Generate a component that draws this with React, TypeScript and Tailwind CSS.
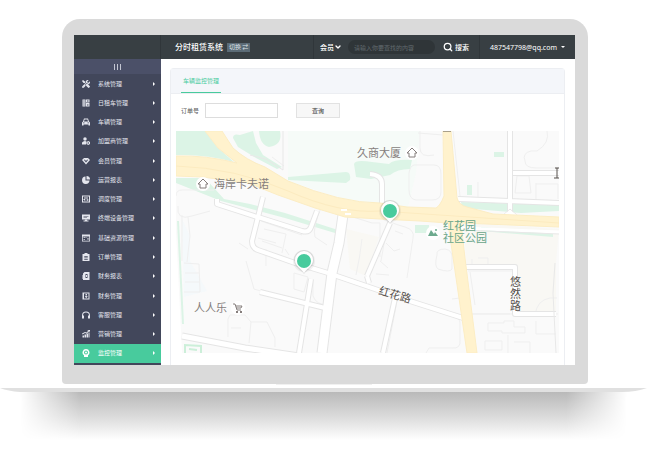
import { useState } from 'react'
import type { ReactNode } from 'react'
import { FaTools } from 'react-icons/fa'
import { Search, ChevronDown } from 'lucide-react'

function Glyph({ children }: { children: ReactNode }) {
  return (
    <svg viewBox="0 0 16 16" className="w-2 h-2 shrink-0" fill="currentColor" aria-hidden="true">
      {children}
    </svg>
  )
}

const menu = [
  { label: '系统管理', icon: <FaTools className="w-2 h-2 shrink-0" /> },
  {
    label: '日租车管理',
    icon: <Glyph><path fillRule="evenodd" d="M1 1h6v14H1zM3 3v2h2V3zM3 7v2h2V7zM3 11v2h2v-2zM8 1h7v6H8zM10 3v2h3V3zM8 8h7v7H8zM10 10v1h3v-1zM10 12v1h3v-1z" /></Glyph>,
  },
  {
    label: '车辆管理',
    icon: <Glyph><path fillRule="evenodd" d="M4 1h8l2 6 2 2v6h-3v-2H3v2H0V9l2-2zM5.200 3 4 7h8l-1.200-4zM2 9v1.500h3V9zM11 9v1.500h3V9z" /></Glyph>,
  },
  {
    label: '加盟商管理',
    icon: <Glyph><circle cx="6" cy="4" r="3.500" /><path d="M0 15v-3c0-2 3-4 6-4l3 1-1 6z" /><path fillRule="evenodd" d="M12.500 8 16 10v4l-3.500 2L9 14v-4zM12.500 10.500a1.500 1.500 0 1 0 0 3 1.500 1.500 0 0 0 0-3z" /></Glyph>,
  },
  {
    label: '会员管理',
    icon: <Glyph><path fillRule="evenodd" d="M4 2h8l4 4-8 9L0 6zM4 6l4 5 4-5-1.500-1L8 8 5.500 5z" /></Glyph>,
  },
  {
    label: '运营报表',
    icon: <Glyph><path d="M7 1v8h8a7.500 7.500 0 1 1-8-8z" /><path d="M9 0a7 7 0 0 1 7 7H9z" /></Glyph>,
  },
  {
    label: '调度管理',
    icon: <Glyph><path fillRule="evenodd" d="M0 1h16v14H0zM2 3v10h12V3z" /><path d="M4 4h1v8H4zM7.500 4h1v8h-1zM11 4h1v8h-1zM3 8h3v2H3zM6.500 5h3v2h-3zM10 9h3v2h-3z" /></Glyph>,
  },
  {
    label: '终端设备管理',
    icon: <Glyph><path fillRule="evenodd" d="M0 1h16v10H0zM3 4v1h10V4zM3 7v1h7V7z" /><path d="M6 11h4v2h3v2H3v-2h3z" /></Glyph>,
  },
  {
    label: '基础资源管理',
    icon: <Glyph><path fillRule="evenodd" d="M0 1h16v14H0zM1.500 5v8.500h13V5z" /><path d="M3 6.500h3v1.500H3zM7 6.500h2v1.500H7zM3 10h3v1.500H3zM11 7.500h2v4h-2z" /></Glyph>,
  },
  {
    label: '订单管理',
    icon: <Glyph><path fillRule="evenodd" d="M1 2h4V0h6v2h4v14H1zM4.500 6v1.500h7V6zM4.500 9v1.500h7V9zM4.500 12v1.500h7V12z" /></Glyph>,
  },
  {
    label: '财务报表',
    icon: <Glyph><path fillRule="evenodd" d="M5 0h10v16H2V3zM7 4v8h4V4zM8 6h2v4H8z" /><path d="M1 6h2v8H1z" /></Glyph>,
  },
  {
    label: '财务管理',
    icon: <Glyph><path fillRule="evenodd" d="M1 1h14v14H1zM4 3v10h9V3z" /><path d="M7 4h3v3H7zM6 8h5v1.500H6zM7.500 9h2v3h-2z" /></Glyph>,
  },
  {
    label: '客服管理',
    icon: <Glyph><path d="M0 9a8 8 0 0 1 16 0v6h-4V9h2A6 6 0 0 0 2 9h2v6H0z" /></Glyph>,
  },
  {
    label: '营销管理',
    icon: <Glyph><path d="M1 11h3v4H1zM5 9h3v6H5zM9 7h3v8H9zM13 5h2v10h-2zM0 7l6-3 3 1 4-4h-2V0h5v4h-1V2L9.500 7 6 6 1 9z" /></Glyph>,
  },
  {
    label: '监控管理',
    icon: <Glyph><path fillRule="evenodd" d="M8 0a7 7 0 0 1 4 12.700V16H4v-3.300A7 7 0 0 1 8 0zM8 3a4 4 0 1 0 0 8 4 4 0 0 0 0-8z" /><circle cx="8" cy="7" r="2" /></Glyph>,
  },
]

const lanes = [
  { w: 4, d: 'M41 68V73L81 86M87 66 76 110Q76 117 82 119L119 132 152 142M82 86 126 100Q133 102 135 96L141 80' },
  { w: 4, d: 'M152 142 196 157 237 171 287 187' },
  { w: 9, d: 'M167 84 163 112 156 142 146 222' },
  { w: 4, d: 'M84 161 149 177M135 148 123 222' },
  { w: 5, d: 'M6 205 69 217 130 226' },
  { w: 4, d: 'M334 0V84M337 42H383M282 68 383 72' },
  { w: 4, d: 'M214 92 191 145M191 145 193 152' },
  { w: 4, d: 'M219 167 207 222' },
  { w: 4, d: 'M290 136H339V183H380' },
  { w: 4, d: 'M194 43Q206 44 206 53V74' },
]

const blocks = [
  'M0 65Q0 59 6 59H38M2 75Q0 90 16 85L34 80M85 90 126 104M72 118 63 112M88 98 110 103 106 122M82 107 100 112M146 74Q136 98 139 106L151 114M109 118 113 124M90 118V135',
  'M6 84V130M12 86 14 105 11 131M8 132 23 133 24 161H8M9 142H23M9 151H23M70 130 78 158 88 161M86 110 106 117M118 142 132 146 128 161 118 158ZM137 151V165Q140 174 152 174',
  'M52 206V188L54 184H69L75 191H91L99 207V216M75 191 73 212M55 197H65M96 26 108 35',
  'M244 0V17Q244 27 258 24M238 34H258Q265 34 265 43V61Q265 69 256 69H240Q233 68 233 59V42Q234 35 238 34M277 0 284 65M334 42V68',
  'M371 0Q374 12 361 20H355Q346 22 349 30 349 37 360 37H383M360 53H382V68M360 52V70M341 45H353L355 62H339ZM302 51V66',
  'M212 90Q221 94 229 96 239 99 237 107L231 147M219 100 227 103M210 112 218 120 224 118M204 130 212 137M200 143 213 144M212 90 205 130',
  'M242 2 267 4M261 124Q260 118 269 118 277 119 276 128V138Q274 142 262 138 258 135 261 124M302 127H312V134H296V128M292 140H339M294 141 299 174M276 168 284 167',
  'M221 170 211 222M250 222 253 217H276Q285 218 284 209V192Q284 187 277 186M285 183H334M288 183H382M312 200V192H328V190H338V196H349V202H326V200ZM309 210H326V219H309V210M332 204V222M338 211H354V222M360 190V203H380M359 184Q361 169 374 167H381',
  'M177 86 196 92H204V126M186 108Q184 126 180 144M162 97 159 145',
]

function Pin({ x, y }: { x: number; y: number }) {
  return (
    <g transform={`translate(${x} ${y})`}>
      <circle r="11" fill="#555" opacity=".08" />
      <path d="M-10-1A10 10 0 1 1 10-1C10 6 4 8 0 13-4 8-10 6-10-1Z" fill="#555" opacity=".14" />
      <path d="M-9-1A9 9 0 1 1 9-1C9 5 3 7 0 12-3 7-9 5-9-1Z" fill="#fff" />
      <circle r="7" fill="#48cb9d" />
    </g>
  )
}

function CityMap() {
  return (
    <svg viewBox="0 0 383 222" className="block w-full h-auto" role="img" aria-label="车辆监控地图">
      <path d="M0 0H383V222H6L0 100Z" fill="#fafafa" />
      <path d="M112 0H244L240 42 232 76 170 69 112 50Z" fill="#f6fbf8" />
      <path d="M288 92 383 98 380 132V184H339V135H290ZM170 98 203 106 190 145 174 138Z" fill="#f9f8f4" />
      <path d="M6 88 14 105V130L31 160 8 166Z" fill="#f5f9fb" />

      {/* parks */}
      <g fill="#dcf4e6">
        <path d="M0 0H29L42 17 58 31Q30 23 0 24Z" />
        <path d="M57 7Q57 2 64 4L77 0 80 12 87 24 106 36 101 38 80 27 62 16Z" />
        <path d="M83 0H104Q107 14 93 16 84 14 83 0Z" />
        <path d="M112 46 170 41Q175 41 174 49L170 52 112 49Z" />
        <path d="M178 33Q179 28 196 31L213 33Q218 28 236 29L234 38Q221 38 214 44L195 48 180 46Z" />
        <path d="M0 47H29L48 68 74 73 109 82 162 99 159 102 109 87 45 70 0 52Z" />
        <path d="M285 71 383 74V80L345 82 286 77ZM318 21H328V26H318ZM291 54H296V64H291ZM239 94H253V102H239ZM305 96 377 103V106L305 100Z" />
      </g>
      <path d="M2 90 7 193" stroke="#dcf4e6" strokeWidth="2" fill="none" />
      <path d="M9 222V214L25 215V222M13 218 21 219" stroke="#ccefd9" strokeWidth="2" fill="none" />

      <g fill="none" stroke="#efefef">
        {blocks.map((d) => (
          <path key={d} d={d} />
        ))}
      </g>
      <g fill="none" stroke="#e5e5e5" strokeLinejoin="round">
        {lanes.map((lane) => (
          <path key={lane.d} d={lane.d} strokeWidth={lane.w + 2} />
        ))}
      </g>
      <g fill="none" stroke="#fff" strokeLinejoin="round">
        {lanes.map((lane) => (
          <path key={lane.d} d={lane.d} strokeWidth={lane.w} />
        ))}
      </g>
      <path d="M379 132 377 162 380 222M107 0V39L90 28 74 24M334 78 326 85H342Z" stroke="#e8e8e8" fill="none" />
      <path d="M334 79 326 85H342Z" fill="#fff" />

      {/* main roads */}
      <path
        d="M0 25Q30 24 61 32L42 17 29 0H46L57 17Q70 29 89 36L112 50Q165 72 204 72L231 76 260 77Q264 75 268 65L267 0H275L281 67Q283 74 291 76L317 83 383 86V96L285 92 289 127 301 222H291L272 92 244 90 204 88 169 86 139 77 102 64 72 52 26 46 0 45Z"
        fill="#fff2cd"
        stroke="#fcedc4"
        strokeWidth="1"
      />
      <path d="M0 35Q60 37 112 60T204 80L383 92" stroke="#fcebc0" fill="none" />
      <path d="M165 79H171M169 83H175" stroke="#fff" strokeWidth="2" />
      <path d="M285 97 383 101" stroke="#fff" strokeWidth="3" />
      <path d="M285 99 383 103" stroke="#e8e8e8" />

      <g fill="#fff">
        <circle cx="27" cy="53" r="7" />
        <circle cx="236" cy="22" r="7" />
        <circle cx="62" cy="177" r="7" />
        <circle cx="257" cy="102" r="7" />
      </g>

      <g className="font-['Noto_Sans_CJK_SC',sans-serif] text-[11px]" fill="#857e7c">
        <text x="38" y="57">海岸卡夫诺</text>
        <text x="181" y="26">久商大厦</text>
        <text x="18" y="181">人人乐</text>
        <text fill="#67a488">
          <tspan x="267" y="99">红花园</tspan>
          <tspan x="267" y="111">社区公园</tspan>
        </text>
        <text transform="translate(202 163) rotate(16)" fill="#57514d">红花路</text>
        <text fill="#57514d">
          <tspan x="334" y="155">悠</tspan>
          <tspan x="334" y="167">然</tspan>
          <tspan x="334" y="179">路</tspan>
        </text>
        <path d="M379 37H383M381 37V47M378 47H383M267 0H275" stroke="#57514d" fill="none" />
      </g>

      <g fill="none" stroke="#857e7c">
        <path d="M22 53 27 48 32 53H30V57H24V53ZM231 22 236 17 241 22H239V26H233V22Z" />
        <path d="M57 173H59L61 179H65M60 175H66L65 177H60" />
      </g>
      <path d="M60 180h2v2h-2zM64 180h2v2h-2z" fill="#857e7c" />
      <path d="M252 105 255 99 258 103 259 101 262 105Z" fill="#6daa8e" />
      <circle cx="260" cy="99" r="1" fill="#6daa8e" />

      <Pin x={214} y={80} />
      <Pin x={128} y={130} />
    </svg>
  )
}

function Header() {
  return (
    <header className="flex h-6 bg-[#383f43] text-white text-[7px] leading-none">
      <div className="w-[87px] shrink-0 border-r border-[#30363a]" />
      <div className="flex flex-1 items-center gap-1 pl-3.5">
        <h1 className="text-[8px] font-medium whitespace-nowrap">分时租赁系统</h1>
        <button className="h-[9px] px-0.5 bg-[#5b6b76] text-[6px] text-[#dfe6ea] leading-none whitespace-nowrap">切换 ⇄</button>
      </div>
      <form className="flex items-center border-l border-[#30363a] pl-1.5 pr-2.5" onSubmit={(e) => e.preventDefault()}>
        <div className="relative flex items-center">
          <select aria-label="搜索类型" className="w-[22px] appearance-none bg-transparent font-medium outline-none">
            <option>会员</option>
          </select>
          <ChevronDown className="absolute right-0 w-2 h-2 pointer-events-none" strokeWidth={4} />
        </div>
        <input
          type="text"
          aria-label="搜索内容"
          placeholder="请输入你要查找的内容"
          className="ml-1.5 mr-2 h-3.5 w-[87px] rounded-full bg-[#2f3538] px-1.5 text-[6px] placeholder:text-[#626a6e] outline-none"
        />
        <button className="flex items-center gap-0.5 font-medium whitespace-nowrap">
          <Search className="w-2.5 h-2.5" strokeWidth={3} />
          搜索
        </button>
      </form>
      <button className="flex items-center gap-1 border-l border-[#30363a] pl-2.5 pr-2.5 font-['Noto_Sans',sans-serif]">
        487547798@qq.com
        <span className="border-x-2 border-t-2 border-x-transparent border-t-white" />
      </button>
    </header>
  )
}

function Sidebar() {
  const [active, setActive] = useState('监控管理')

  return (
    <nav className="flex flex-col w-[87px] shrink-0 bg-[#42475b] pb-0.5 text-[6px] leading-none text-[#e4e6ee]">
      <button aria-label="折叠菜单" className="flex h-[15px] items-center justify-center gap-0.5 bg-[#4b5068]">
        <span className="w-px h-1.5 bg-[#c3c6d2]" />
        <span className="w-px h-1.5 bg-[#c3c6d2]" />
        <span className="w-px h-1.5 bg-[#c3c6d2]" />
      </button>
      <ul className="flex flex-1 flex-col">
        {menu.map((item) => (
          <li key={item.label} className="flex flex-1">
            <button
              onClick={() => setActive(item.label)}
              className={`flex w-full items-center gap-2 pl-2 pr-1.5 ${active === item.label ? 'bg-[#48cb9d] text-white' : ''}`}
            >
              {item.icon}
              <span className="flex-1 text-left whitespace-nowrap">{item.label}</span>
              <span className="border-y-2 border-l-2 border-y-transparent border-l-white" />
            </button>
          </li>
        ))}
      </ul>
    </nav>
  )
}

export default function App() {
  return (
    <div className="min-h-screen overflow-hidden bg-white pt-[19px] font-['Noto_Sans_CJK_SC',sans-serif]">
      <div className="ml-[62px] mr-[59px] rounded-t-[18px] rounded-b-sm bg-[#dadada] pl-3 pr-[13px] pt-4 pb-[19px]">
        <Header />
        <div className="flex bg-white">
          <Sidebar />
          <main className="flex-1 min-w-0 pl-[9px] pr-2.5 pt-[9px]">
            <section className="rounded-t-sm border border-b-0 border-[#eceef2] pb-3">
              <div className="flex h-[25px] bg-[#f4f6fa] border-b border-[#eceef2] pl-2.5">
                <a href="#monitor" className="flex items-center border-b border-[#48cb9d] px-0.5 text-[6px] leading-none text-[#48cb9d]">
                  车辆监控管理
                </a>
              </div>
              <form className="flex items-center px-2.5 pt-[9px] pb-[13px] text-[6px] leading-none text-[#555]" onSubmit={(e) => e.preventDefault()}>
                <label htmlFor="order">订单号</label>
                <input id="order" type="text" className="ml-1.5 h-[15px] w-[73px] border border-[#ddd] bg-white px-1 outline-none" />
                <button className="ml-[18px] h-[15px] w-11 border border-[#e2e2e2] bg-[#f7f7f7] text-[#333]">查询</button>
              </form>
              <div className="px-[5px]">
                <CityMap />
              </div>
            </section>
          </main>
        </div>
      </div>

      {/* laptop base and its shadow */}
      <div className="mx-auto h-1 w-24 border-t border-[#f0f0f0]" />
      <svg viewBox="0 0 647 4" preserveAspectRatio="none" className="block w-full h-1" aria-hidden="true">
        <path d="M0 0H647Q636 4 622 4H20Q8 3 0 0Z" fill="#e0e0e0" />
      </svg>
      <div className="mx-5 h-12 bg-linear-to-b from-[#b9b9b9] via-[#dadada] to-white mask-[linear-gradient(to_right,transparent,black_10%,black_90%,transparent)]" />
    </div>
  )
}
